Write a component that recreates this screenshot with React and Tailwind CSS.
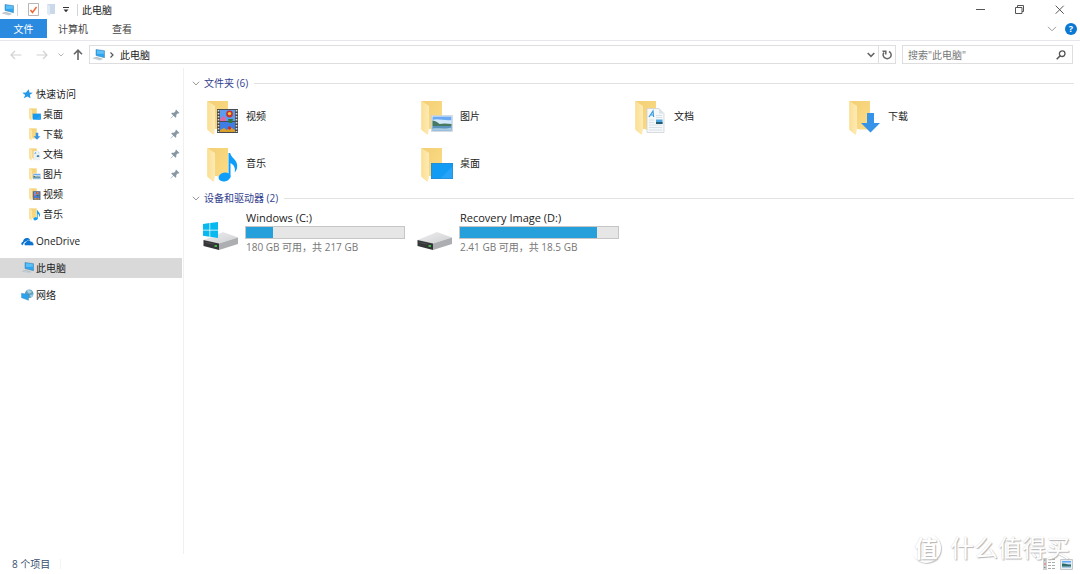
import React from 'react';

const folders = [
  { name: '视频', kind: 'video' },
  { name: '图片', kind: 'picture' },
  { name: '文档', kind: 'document' },
  { name: '下载', kind: 'download' },
  { name: '音乐', kind: 'music' },
  { name: '桌面', kind: 'desktop' },
];

const quickAccess = [
  { name: '桌面', kind: 'desktop', pinned: true },
  { name: '下载', kind: 'download', pinned: true },
  { name: '文档', kind: 'document', pinned: true },
  { name: '图片', kind: 'picture', pinned: true },
  { name: '视频', kind: 'video' },
  { name: '音乐', kind: 'music' },
];

const drives = [
  { name: 'Windows (C:)', info: '180 GB 可用，共 217 GB', used: 17, system: true },
  { name: 'Recovery Image (D:)', info: '2.41 GB 可用，共 18.5 GB', used: 87 },
];

const overlays = {
  video: (
    <g>
      <rect x="10" y="9" width="21" height="24" fill="#4a4b4e" />
      <path d="M11.500 10v22M29.500 10v22" stroke="#dcdcdc" strokeWidth="1.600" strokeDasharray="1.500 1.500" />
      <rect x="13" y="10" width="15" height="11" fill="#5b9bf2" />
      <rect x="13" y="22" width="15" height="10" fill="#3f7de6" />
      <circle cx="22.500" cy="14" r="3.400" fill="#c8322d" />
      <circle cx="22.500" cy="13.600" r="1.700" fill="#f4c430" />
      <path d="M13 19l3-3 3 2v3h-6z" fill="#d66aa8" />
      <path d="M21 19h5l-1 4h-3z" fill="#2f7a35" />
      <path d="M13 30l4-2 3 2 3-3 5 3v2H13z" fill="#d9a02c" />
      <circle cx="22.500" cy="28" r="1.700" fill="#c8322d" />
    </g>
  ),
  picture: (
    <g>
      <rect x="10.500" y="15.500" width="21" height="16" fill="#f4f7fa" stroke="#c3ccd4" strokeWidth=".7" />
      <rect x="11.500" y="16.500" width="19" height="14" fill="#6ba9f2" />
      <path d="M11.500 20c5-2 12 1 19 0v6h-19z" fill="#d3e8fb" />
      <path d="M11.500 20.500c3 .5 5 1.500 7 3.500 4-1 8-.5 12 0v2h-19z" fill="#47795f" />
      <path d="M11.500 26h19v4.500h-19z" fill="#5c93bd" />
      <path d="M11.500 28.500c6-1 12 1 19-1v3h-19z" fill="#a9cbe2" />
    </g>
  ),
  document: (
    <g>
      <path d="M12 8.500h12l5 5v19H12z" fill="#f5f8fa" stroke="#c9ced2" strokeWidth=".7" />
      <path d="M24 8.500v5h5z" fill="#dce1e4" />
      <path d="M14 17l4-6 .6 6M15.200 15h3.400" fill="none" stroke="#3e9bdc" strokeWidth="1.200" />
      <path d="M21 15.500h6M21 17.500h6M14 20h5M14 22.500h5M14 25h13M14 27.500h13M14 30h13" stroke="#cfdae1" strokeWidth=".8" />
      <rect x="21" y="19.500" width="6.500" height="4.500" fill="#4fa5df" />
      <path d="M21 22h6.500v2H21z" fill="#245c72" />
    </g>
  ),
  download: <path d="M18 13h7v10h6l-9.500 9.500L12 23h6z" fill="#3793e8" />,
  music: (
    <g fill="#0d9dfb">
      <ellipse cx="17.500" cy="30" rx="6" ry="4.300" transform="rotate(-14 17.500 30)" />
      <path d="M21.500 6h1.700c.5 4.500 7 6.500 7 13 0 3-1 5-2.500 6.500 1-5-1.200-8-4.200-9.500v14.500h-2z" />
    </g>
  ),
  desktop: (
    <g>
      <rect x="10" y="16" width="22" height="16" fill="#129bf5" />
      <path d="M19 32l13-13v13z" fill="#27a4f8" />
      <rect x="10.300" y="16.300" width="21.400" height="15.400" fill="none" stroke="#2a87c9" strokeWidth=".6" />
    </g>
  ),
};

const FolderIcon = ({ kind, className }) => (
  <svg viewBox="0 0 32 36" className={className} aria-hidden="true">
    <defs>
      <linearGradient id="folder-back" x1="0" y1="0" x2="1" y2="1">
        <stop offset="0" stopColor="#f3cf75" />
        <stop offset="1" stopColor="#fbdc86" />
      </linearGradient>
      <linearGradient id="folder-flap" x1="0" y1="0" x2="1" y2="0">
        <stop offset="0" stopColor="#fbdf93" />
        <stop offset="1" stopColor="#fdeab6" />
      </linearGradient>
    </defs>
    <path d="M.5 1H21v28.500H.5z" fill="url(#folder-back)" />
    <path d="M7 29h3v3l-3 2z" fill="#fff" />
    <path d="M.5 1l7.500 5v23l-1 5.500H6L.5 30z" fill="url(#folder-flap)" />
    {overlays[kind]}
  </svg>
);

const ComputerIcon = ({ className }) => (
  <svg viewBox="0 0 14 12" className={className} aria-hidden="true">
    <path d="M4 .5l8.500 1.200v7L4 6.500z" fill="#2ea5f2" stroke="#3f7ea5" strokeWidth=".5" />
    <path d="M5 1.300l6.800 1v2.500L5 5z" fill="#5bc0f8" />
    <path d="M.5 9.300l4-1.300 7 2-4 1.500z" fill="#c7d0d6" />
    <path d="M1.500 9.300l3-.8 5 1.400" fill="none" stroke="#98a8b2" strokeWidth=".5" />
  </svg>
);

const DriveIcon = ({ system }) => (
  <svg viewBox="0 0 36 32" className="h-8 w-9 shrink-0" aria-hidden="true">
    <defs>
      <linearGradient id="drive-top" x1="0" y1="0" x2="1" y2="1">
        <stop offset="0" stopColor="#eeeef0" />
        <stop offset="1" stopColor="#cfd0d3" />
      </linearGradient>
    </defs>
    <path d="M.5 20L20 12l15 5.500-19 6z" fill="url(#drive-top)" />
    <path d="M.5 20l15.500 3.500V30L.5 26z" fill="#353638" />
    <path d="M16 23.500l19-6V24l-19 6z" fill="#adaeb1" />
    <path d="M2.500 22.500l8 1.700" stroke="#555" strokeWidth=".8" />
    <rect x="11.500" y="25" width="2.500" height="2" fill="#43b649" />
    {system && (
      <path d="M0 4l6.500-.9v6.700H0zM7.200 3L15 2v7.800H7.200zM0 10.500h6.500v6.200L0 15.800zM7.200 10.500H15V18l-7.800-1.200z" fill="#08b9ef" />
    )}
  </svg>
);

const PinIcon = () => (
  <svg viewBox="0 0 10 10" className="h-[10px] w-[10px]" aria-hidden="true">
    <path d="M6 .5L9.500 4l-1 .5-.6-.2L6.200 6l.1 2-.8.800-2-2L.8 9.500l-.3-.3 2.700-2.700-2-2L2 3.700l2 .1 1.700-1.700-.2-.6z" fill="#8796a3" />
  </svg>
);

const ChevronIcon = ({ className }) => (
  <svg viewBox="0 0 10 6" className={className} fill="none" stroke="currentColor" aria-hidden="true">
    <path d="M1 .8l4 4 4-4" />
  </svg>
);

const TitleBar = () => (
  <header className="flex h-[19px] items-center">
    <ComputerIcon className="ml-px h-3 w-[14px]" />
    <span className="ml-[2px] h-3 w-px bg-gray-300" />
    <button aria-label="属性" className="ml-[10px]">
      <svg viewBox="0 0 11 13" className="h-[13px] w-[11px]">
        <path d="M.5.5h10v12H.5z" fill="#fff" stroke="#a5a5a5" strokeWidth=".8" />
        <path d="M2.500 7l2 2.500L8.500 4" fill="none" stroke="#ec6a35" strokeWidth="1.500" />
      </svg>
    </button>
    <button aria-label="新建文件夹" className="ml-2">
      <svg viewBox="0 0 8 12" className="h-3 w-2">
        <path d="M0 0h8v10H0z" fill="#c9d9ea" />
        <path d="M0 0l3 2v10l-3-2z" fill="#e0e9f3" />
      </svg>
    </button>
    <button aria-label="自定义快速访问工具栏" className="ml-2">
      <svg viewBox="0 0 6 6" className="h-[6px] w-[6px]">
        <path d="M0 0h6v1H0zM.5 2.500h5L3 5.300z" fill="#333" />
      </svg>
    </button>
    <span className="ml-2 h-3 w-px bg-gray-300" />
    <h1 className="ml-1">此电脑</h1>
    <div className="ml-auto flex text-[#555]">
      <button aria-label="最小化" className="flex h-[19px] w-10 items-center justify-center">
        <svg viewBox="0 0 10 10" className="h-[10px] w-[10px]"><path d="M1 4.500h9" stroke="currentColor" /></svg>
      </button>
      <button aria-label="还原" className="flex h-[19px] w-10 items-center justify-center">
        <svg viewBox="0 0 10 10" className="h-[10px] w-[10px]" fill="none" stroke="currentColor">
          <path d="M.5 2.500h6.500v6H.5zM2.500 2.500v-2h6v6H7" />
        </svg>
      </button>
      <button aria-label="关闭" className="flex h-[19px] w-10 items-center justify-center">
        <svg viewBox="0 0 10 10" className="h-[10px] w-[10px]"><path d="M.7.7l8 8M8.700.7l-8 8" stroke="currentColor" /></svg>
      </button>
    </div>
  </header>
);

const RibbonTabs = () => (
  <nav className="flex h-[22px] items-start border-b border-gray-200">
    <button className="h-[19px] w-[47px] bg-[#2a8ae0] text-white">文件</button>
    <button className="ml-[10px] h-5 px-px text-[#444]">计算机</button>
    <button className="ml-[22px] h-5 px-px text-[#444]">查看</button>
    <div className="ml-auto flex h-5 items-center gap-2 pr-[3px]">
      <button aria-label="展开功能区" className="text-[#999]">
        <ChevronIcon className="h-[6px] w-[10px]" />
      </button>
      <button aria-label="帮助" className="h-3 w-3 rounded-full bg-[#0b78d4] text-[9px] leading-3 font-bold text-white">?</button>
    </div>
  </nav>
);

const AddressBar = () => (
  <div className="flex h-[27px] items-center pr-[7px]">
    <button aria-label="后退" className="ml-[10px] text-[#d2d2d2]">
      <svg viewBox="0 0 12 10" className="h-[10px] w-3" fill="none" stroke="currentColor" strokeWidth="1.200"><path d="M11.500 5H1.200M5 1L1 5l4 4" /></svg>
    </button>
    <button aria-label="前进" className="ml-[14px] text-[#d2d2d2]">
      <svg viewBox="0 0 12 10" className="h-[10px] w-3" fill="none" stroke="currentColor" strokeWidth="1.200"><path d="M.5 5h10.300M7 1l4 4-4 4" /></svg>
    </button>
    <button aria-label="最近浏览的位置" className="ml-[10px] text-[#b5b5b5]">
      <svg viewBox="0 0 6 4" className="h-1 w-[6px]" fill="none" stroke="currentColor"><path d="M.5.5L3 3 5.500.5" /></svg>
    </button>
    <button aria-label="上移" className="ml-[9px] text-[#666]">
      <svg viewBox="0 0 10 11" className="h-[11px] w-[10px]" fill="none" stroke="currentColor" strokeWidth="1.600"><path d="M5 11V1.500M1 5.200l4-4 4 4" /></svg>
    </button>
    <div className="ml-[6px] flex h-[19px] grow items-center border border-[#dedede]">
      <ComputerIcon className="ml-[2px] h-3 w-[14px]" />
      <svg viewBox="0 0 4 6" className="ml-1 h-[6px] w-1" fill="none" stroke="#555" strokeWidth="1.200" aria-hidden="true"><path d="M.5.5L3 3 .5 5.500" /></svg>
      <span className="ml-[6px]">此电脑</span>
      <button aria-label="历史记录" className="mr-[3px] ml-auto text-[#666]">
        <svg viewBox="0 0 8 6" className="h-[6px] w-2" fill="none" stroke="currentColor" strokeWidth="1.600"><path d="M.7 1L4 4.300 7.300 1" /></svg>
      </button>
      <button aria-label="刷新" className="flex h-full w-[17px] items-center justify-center border-l border-[#dedede] text-[#666]">
        <svg viewBox="0 0 10 10" className="h-[10px] w-[10px]" fill="none" stroke="currentColor" strokeWidth="1.500">
          <path d="M7 1.500A4 3.800 0 1 1 2 2.500M.5 1.200h3.300v3.300" />
        </svg>
      </button>
    </div>
    <label className="ml-[6px] flex h-[19px] w-[171px] items-center border border-[#dedede] pr-[6px] pl-[5px]">
      <input aria-label="搜索此电脑" placeholder={'搜索"此电脑"'} className="min-w-0 grow outline-none placeholder:text-[#777]" />
      <svg viewBox="0 0 10 10" className="h-[10px] w-[10px]" fill="none" stroke="#555" aria-hidden="true">
        <circle cx="6.200" cy="3.700" r="2.800" strokeWidth="1.300" />
        <path d="M4.200 5.700L.7 9.200" strokeWidth="1.600" />
      </svg>
    </label>
  </div>
);

const Sidebar = () => (
  <aside className="w-[184px] shrink-0 border-r border-[#f0f0f0] pt-4 pr-px">
    <a href="#quick" className="flex h-5 items-center gap-[3px] pl-[22px]">
      <svg viewBox="0 0 12 12" className="h-3 w-[11px]" aria-hidden="true">
        <path d="M7.300.8l.8 3.500 3.600.3-3 2.300.5 3.800-3.300-2-4 2 1.600-3.700L.3 4.600l4-.3z" fill="#2598e6" />
      </svg>
      快速访问
    </a>
    <ul>
      {quickAccess.map((item) => (
        <li key={item.name}>
          <a href="#folder" className="flex h-5 items-center pr-[2px] pl-[29px]">
            <FolderIcon kind={item.kind} className="h-[13px] w-3" />
            <span className="ml-[2px] grow">{item.name}</span>
            {item.pinned && <PinIcon />}
          </a>
        </li>
      ))}
    </ul>
    <a href="#onedrive" className="mt-[7px] flex h-5 items-center gap-[2px] pl-[21px]">
      <svg viewBox="0 0 13 9" className="h-[9px] w-[13px]" aria-hidden="true">
        <path d="M1.500 8.300C-.3 7.500 0 5 2 4.700 2.200 2 5 0 7.500 1.300c1 .5 1.500 1.400 1.700 2.200L3.500 5z" fill="#0b72cf" />
        <path d="M4.800 8.500C2.500 8.300 3 5.300 5 5.200c.5-2.400 4-2.700 4.800-.6 1.200-.3 2.200.4 2.200 1.500 1.200.4.900 2.400-.3 2.400z" fill="#0b72cf" stroke="#fff" strokeWidth=".4" />
      </svg>
      OneDrive
    </a>
    <a href="#computer" aria-current="page" className="mt-[7px] flex h-5 items-center gap-px bg-[#d9d9d9] pl-[21px]">
      <ComputerIcon className="h-3 w-[14px]" />
      此电脑
    </a>
    <a href="#network" className="mt-[7px] flex h-5 items-center gap-[2px] pl-[21px]">
      <svg viewBox="0 0 13 12" className="h-3 w-[13px]" aria-hidden="true">
        <circle cx="8.200" cy="4.800" r="4.300" fill="#5f9fc0" />
        <path d="M6 1.500c2-1 4 0 5 1.500l-2 1.500-2-.5zM9 6l3-.5c0 1.500-1 2.500-2 3z" fill="#a4d0df" />
        <path d="M.5 4.200l7 1.300v5.800L.5 8.700z" fill="#2ba2ee" stroke="#3b86b5" strokeWidth=".4" />
      </svg>
      网络
    </a>
  </aside>
);

const SectionHeader = ({ title }) => (
  <h2 className="flex h-5 items-center text-[#33418f]">
    <ChevronIcon className="mr-1 h-[5px] w-2 text-[#777]" />
    {title}
    <span className="ml-[6px] h-px grow bg-[#e2e2e2]" />
  </h2>
);

const StatusBar = () => (
  <footer className="flex h-5 items-center pr-[7px] pl-3 text-[#38506e]">
    <span>8 个项目</span>
    <span className="ml-[10px] h-[10px] w-px bg-gray-100" />
    <div className="ml-auto flex items-center gap-[5px]">
      <button aria-label="详细信息">
        <svg viewBox="0 0 12 12" className="h-3 w-3">
          <path d="M0 0h4v12H0z" fill="#d0d0d0" />
          <path d="M1 2h1.500M1 9.500h1.500" stroke="#888" />
          <path d="M1 6h2" stroke="#d66" />
          <path d="M5 1.500h3M9 1.500h3M5 4.500h3M9 4.500h3M5 7.500h3M9 7.500h3M5 10.500h3M9 10.500h3" stroke="#aaa" />
        </svg>
      </button>
      <button aria-label="大图标">
        <svg viewBox="0 0 13 11" className="h-[11px] w-[13px]">
          <path d="M.5.5h12v10H.5z" fill="#e8eef4" stroke="#c5c9cd" />
          <path d="M2 2h9v7H2z" fill="#64aaf0" />
          <path d="M2 3.500h9v2H2z" fill="#cfe5fa" />
          <path d="M2 4.500c3-.5 4 1 9 1V9H2z" fill="#316d68" />
          <path d="M2 7.500h9V9H2z" fill="#a9cbe0" />
        </svg>
      </button>
    </div>
  </footer>
);

const Watermark = () => (
  <div className="pointer-events-none absolute right-[10px] bottom-[10px] flex items-center gap-[9px] text-white [text-shadow:1px_1px_1px_#b4b4b4,0_0_1px_#ccc]">
    <span className="flex h-[30px] w-[30px] items-center justify-center rounded-full shadow-[1px_1px_1px_#c4c4c4] text-[23px] leading-none font-bold">值</span>
    <span className="text-[24px] leading-8">什么值得买</span>
  </div>
);

const App = () => {
  return (
    <div className="relative flex min-h-screen flex-col bg-white font-['Open_Sans','Noto_Sans_CJK_SC',sans-serif] text-[10px] leading-4 text-[#222]">
      <TitleBar />
      <RibbonTabs />
      <AddressBar />
      <div className="flex grow">
        <Sidebar />
        <main className="min-w-0 grow pt-[5px] pr-[6px] pl-2">
          <section>
            <SectionHeader title="文件夹 (6)" />
            <ul className="grid grid-cols-[repeat(auto-fill,214px)] gap-y-[11px] pt-[7px] pb-[5px]">
              {folders.map((folder) => (
                <li key={folder.name} className="flex h-9 items-center pl-[15px]">
                  <FolderIcon kind={folder.kind} className="h-9 w-8" />
                  <span className="mb-1 ml-[7px]">{folder.name}</span>
                </li>
              ))}
            </ul>
          </section>
          <section>
            {/* capacity of each drive */}
            <SectionHeader title="设备和驱动器 (2)" />
            <ul className="grid grid-cols-[repeat(auto-fill,214px)] pt-[2px]">
              {drives.map((drive) => (
                <li key={drive.name} className="flex items-start pl-[11px]">
                  <div className="pt-[10px]">
                    <DriveIcon system={drive.system} />
                  </div>
                  <div className="ml-[6px] w-40">
                    <p className="px-px text-[11px]">{drive.name}</p>
                    <div className="h-[13px] border border-[#c6c6c6] bg-[#e6e6e6]">
                      <div className="h-full bg-[#26a0da]" style={{ width: `${drive.used}%` }} />
                    </div>
                    <p className="px-px text-[#777]">{drive.info}</p>
                  </div>
                </li>
              ))}
            </ul>
          </section>
        </main>
      </div>
      <StatusBar />
      <Watermark />
    </div>
  );
};

export default App;
